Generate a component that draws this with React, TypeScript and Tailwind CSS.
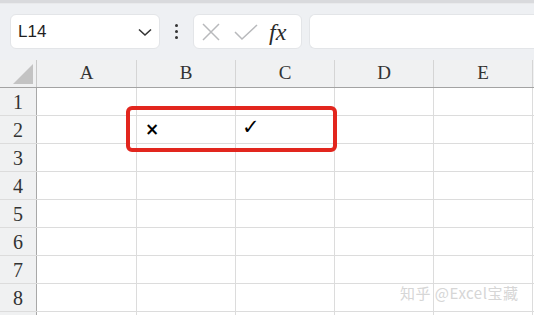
import React from 'react'

const COLS = ['A', 'B', 'C', 'D', 'E']
const COL_W = ['w-[100px]', 'w-[99px]', 'w-[99px]', 'w-[99px]', 'w-[99px]']
const ROWS = [1, 2, 3, 4, 5, 6, 7, 8, 9]

const cellContent = (row: number, col: string) => {
  if (row === 2 && col === 'B') return <span className="pl-[8px] text-[17px] font-bold leading-none text-black font-['DejaVu_Sans',sans-serif]">×</span>
  if (row === 2 && col === 'C') return <span className="pl-[6px] pb-[4px] text-[21px] leading-none text-black font-['DejaVu_Sans',sans-serif]">✓</span>
  return null
}

export default function App() {
  return (
    <div className="relative w-[534px] h-[315px] overflow-hidden bg-white font-['Liberation_Sans',sans-serif]">
      {/* top strip */}
      <div className="h-[4px] bg-[#d9dadd] border-b border-[#e9eaec]" />

      {/* formula bar */}
      <div className="h-[56px] bg-[#eef0f3] flex items-start pt-[10px] pl-[10px]">
        <div className="w-[150px] h-[35px] bg-white rounded-md border border-[#e3e5e8] flex items-center justify-between pl-[7px] pr-[5px]">
          <span className="text-[17px] text-[#1f1f1f]">L14</span>
          <svg width="18" height="18" viewBox="0 0 18 18" fill="none" stroke="#333" strokeWidth="1.6">
            <path d="M3 6.5 L9 12 L15 6.5" />
          </svg>
        </div>
        <div className="w-[33px] h-[35px] flex flex-col items-center justify-center gap-[3px]">
          <span className="w-[3px] h-[3px] rounded-full bg-[#333]" />
          <span className="w-[3px] h-[3px] rounded-full bg-[#333]" />
          <span className="w-[3px] h-[3px] rounded-full bg-[#333]" />
        </div>
        <div className="w-[109px] h-[35px] bg-white rounded-md border border-[#e3e5e8] flex items-center pl-[7px] gap-[13px]">
          <svg width="20" height="20" viewBox="0 0 20 20" fill="none" stroke="#b8b9bc" strokeWidth="1.5">
            <path d="M2 2 L18 18 M18 2 L2 18" />
          </svg>
          <svg width="24" height="18" viewBox="0 0 24 18" fill="none" stroke="#b8b9bc" strokeWidth="1.5">
            <path d="M1 9 L8 16 L23 2" />
          </svg>
          <span className="text-[24px] italic text-[#2a2a2a] font-['Liberation_Serif',serif] leading-none -ml-[2px]">fx</span>
        </div>
        <div className="ml-[7px] flex-1 h-[35px] bg-white rounded-l-md border border-r-0 border-[#e3e5e8]" />
      </div>

      {/* sheet */}
      <div className="flex flex-col">
        <div className="flex h-[28px] bg-[#f0f1f2] border-b border-[#a3a3a3]">
          <div className="w-[37px] h-full border-r border-[#c8c8c8] flex items-end justify-end pr-[3px] pb-[3px]">
            <svg width="20" height="20" viewBox="0 0 20 20">
              <path d="M20 0 L20 20 L0 20 Z" fill="#c3c3c3" />
            </svg>
          </div>
          {COLS.map((c, i) => (
            <div key={c} className={`${COL_W[i]} h-full border-r border-[#d5d5d5] flex items-center justify-center text-[19px] text-[#333] font-['Liberation_Serif',serif]`}>
              {c}
            </div>
          ))}
        </div>
        {ROWS.map((r) => (
          <div key={r} className="flex h-[28px] border-b border-[#dcdcdc]">
            <div className="w-[37px] h-full bg-[#f0f1f2] border-r border-[#a8a8a8] flex items-center justify-center text-[20px] text-[#333] font-['Liberation_Serif',serif]">
              {r < 9 ? r : ''}
            </div>
            {COLS.map((c, i) => (
              <div key={c} className={`${COL_W[i]} h-full border-r border-[#dcdcdc] flex items-center`}>
                {cellContent(r, c)}
              </div>
            ))}
          </div>
        ))}
      </div>

      {/* highlight */}
      <div className="absolute left-[126px] top-[106px] w-[211px] h-[46px] border-[4px] border-[#e2261e] rounded-[6px]" />

      {/* watermark */}
      <div className="absolute left-[400px] top-[282px] text-[15px] tracking-[0.5px] text-[#d6d6d6] font-['Noto_Sans_CJK_SC',sans-serif] [text-shadow:0_0_1px_#fff]">
        知乎 @Excel宝藏
      </div>
    </div>
  )
}
